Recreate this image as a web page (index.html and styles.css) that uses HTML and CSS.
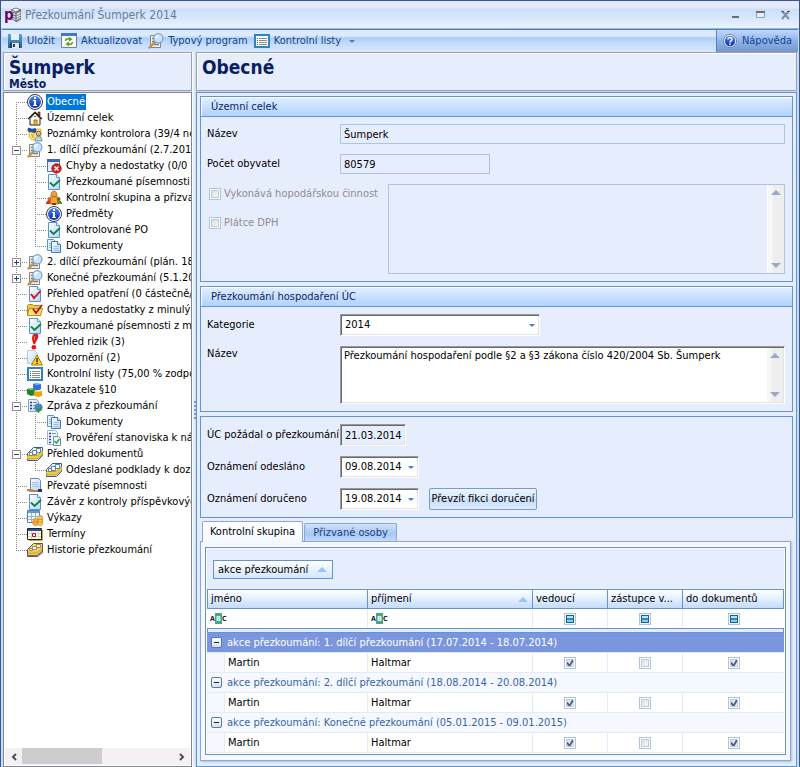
FILE: index.html
```html
<!DOCTYPE html>
<html lang="cs">
<head>
    <meta charset="UTF-8">
    <meta name="viewport" content="width=device-width, initial-scale=1.0">
    <title>Přezkoumání Šumperk 2014</title>
    <link rel="stylesheet" href="styles.css">
</head>
<body>
    <!-- icon set -->
    <svg class="defs" aria-hidden="true">
        <defs>
            <linearGradient id="g-blue" x1="0" y1="0" x2="0" y2="1">
                <stop offset="0" stop-color="#4f86ee"/><stop offset="1" stop-color="#0a2fb4"/>
            </linearGradient>
            <linearGradient id="g-page" x1="0" y1="0" x2="1" y2="1">
                <stop offset="0" stop-color="#fff"/><stop offset="1" stop-color="#b4d4f4"/>
            </linearGradient>
            <linearGradient id="g-save" x1="0" y1="0" x2="0" y2="1">
                <stop offset="0" stop-color="#5aa2d6"/><stop offset="1" stop-color="#2a6294"/>
            </linearGradient>
        </defs>
        <symbol id="i-info" viewBox="0 0 16 16">
            <circle cx="8" cy="8" r="7.5" fill="#fff" stroke="#30364c"/>
            <circle cx="8" cy="8" r="6" fill="url(#g-blue)"/>
            <path d="M7 3h2v2H7zM6 6h3v5h1v1H6v-1h1V7H6z" fill="#fff"/>
        </symbol>
        <symbol id="i-help" viewBox="0 0 16 16">
            <circle cx="8" cy="8" r="6.5" fill="#fff" stroke="#6f7fa8"/>
            <circle cx="8" cy="8" r="5.2" fill="url(#g-blue)"/>
            <path d="M6 6.6C6 4 10 4 10 6.4 10 7.8 8 7.8 8 9.4" fill="none" stroke="#fff" stroke-width="1.5"/>
            <path d="M7.2 10.4h1.6V12H7.2z" fill="#fff"/>
        </symbol>
        <symbol id="i-home" viewBox="0 0 16 16">
            <path d="M11 2h2v4h-2z" fill="#c23a2a" stroke="#222" stroke-width=".6"/>
            <path d="M3 8.5V15h10V8.5L8 3z" fill="#fffbe8" stroke="#222"/>
            <path d="M1.2 9 8 2.2 14.8 9" fill="none" stroke="#222" stroke-width="1.5"/>
            <path d="M7 10h3v5H7z" fill="#f2b632" stroke="#8a5a10" stroke-width=".8"/>
            <path d="M8 5.8 9.2 7H6.8z" fill="#222"/>
        </symbol>
        <symbol id="i-notes" viewBox="0 0 16 16">
            <path d="M2 3h12v11H5l-3-3z" fill="#fbe279" stroke="#c9a227" stroke-width=".7"/>
            <path d="M1 2c2-1 3 1 4.5 1C7 3 8 1 9 3s0 4-2 4C5 7 5 6 4 6 1 7 0 4 1 2z" fill="#1f4f9e"/>
            <circle cx="11.500" cy="7.500" r="2.300" fill="#e9b98a" stroke="#6b4b32" stroke-width=".8"/>
            <path d="M8 15c0-6 7-6 7 0z" fill="#b9d8f4" stroke="#4272a8" stroke-width=".7"/>
            <path d="M4 9h3M5 11h2" stroke="#d28e1a"/>
        </symbol>
        <symbol id="i-search" viewBox="0 0 16 16">
            <path d="M2.500 2.500h10v12h-10z" fill="#f4f1ec" stroke="#8c8378"/>
            <path d="M4 5.500h2M4 8.500h2M6 11.500h5" stroke="#7d7d7d" stroke-width="1.500"/>
            <path d="m6.500 9.500-5 5" stroke="#c48d48" stroke-width="2.400" stroke-linecap="round"/>
            <circle cx="10.300" cy="5.300" r="4.600" fill="#c9e3fa" stroke="#7ba3d0" stroke-width="1.300"/>
            <path d="M7.800 5.300c0-2 1.500-2.800 3-2.600" stroke="#fff" stroke-width="1.500" fill="none"/>
        </symbol>
        <symbol id="i-error" viewBox="0 0 16 16">
            <path d="M1.500 1.500h12v12h-12z" fill="#e6ebf5" stroke="#5f7396"/>
            <path d="M1 1h13v3H1z" fill="#3a66b4"/>
            <circle cx="10.500" cy="10.500" r="4.700" fill="#cf2320" stroke="#8d0f0c" stroke-width=".8"/>
            <path d="m8.500 8.500 4 4m0-4-4 4" stroke="#fff" stroke-width="1.300"/>
        </symbol>
        <symbol id="i-check" viewBox="0 0 16 16">
            <path d="M2.500.500h8l3 3v12h-11z" fill="url(#g-page)" stroke="#5a92cf"/>
            <path d="M10.500.500v3h3" fill="#fff" stroke="#5a92cf"/>
            <path d="m4 8.500 3.500 3.500L14 6" fill="none" stroke="#11803c" stroke-width="1.800"/>
        </symbol>
        <symbol id="i-check-red" viewBox="0 0 16 16">
            <path d="M2.500.500h8l3 3v12h-11z" fill="url(#g-page)" stroke="#5a92cf"/>
            <path d="M10.500.500v3h3" fill="#fff" stroke="#5a92cf"/>
            <path d="m4 8 3 4 6.500-7" fill="none" stroke="#c8151b" stroke-width="1.800"/>
        </symbol>
        <symbol id="i-group" viewBox="0 0 16 16">
            <circle cx="3.500" cy="9" r="2" fill="#d8652a"/>
            <circle cx="12.500" cy="9" r="2" fill="#8a5a1c"/>
            <path d="M0 14c0-5 6-5 6 0z" fill="#d3301f"/>
            <path d="M10 14c0-5 6-5 6 0z" fill="#5c8a2a"/>
            <path d="M5 7c-1-8 7-8 6 0z" fill="#e9a13b" stroke="#9a5a14" stroke-width=".7"/>
            <path d="M4 14c0-10 8-10 8 0z" fill="#f0a62c" stroke="#9a5a14" stroke-width=".7"/>
            <path d="M6 13h4v2H6z" fill="#7c3c12"/>
        </symbol>
        <symbol id="i-docs" viewBox="0 0 16 16">
            <path d="M1.500 1.500h6l2 2v9h-8z" fill="#e6f1fd" stroke="#5a92d4"/>
            <path d="M3 5.500h2M3 7.500h2M3 9.500h2" stroke="#86b1e4"/>
            <path d="M5.500 3.500h6l3 3v8h-9z" fill="url(#g-page)" stroke="#3f7bc4"/>
            <path d="M7.500 8.500h5M7.500 10.500h5M7.500 12.500h5" stroke="#9cc0ec"/>
            <path d="M11.500 3.500v3h3" fill="#fff" stroke="#3f7bc4"/>
        </symbol>
        <symbol id="i-folder-check" viewBox="0 0 16 16">
            <path d="M.500 13.500v-10l1-1h4l1 1h7v10z" fill="#f2c84c" stroke="#b98a14"/>
            <path d="M.500 13.500 2 6.500h13.500l-2 7z" fill="#fbe07a" stroke="#b98a14"/>
            <path d="m6 7 3 4 6-8" fill="none" stroke="#b0151b" stroke-width="1.800"/>
        </symbol>
        <symbol id="i-risk" viewBox="0 0 16 16">
            <path d="M7 0c4-1 5 1 4 4L8 10H6.500C5 7 4 2 7 0z" fill="#e3141b"/>
            <circle cx="6.800" cy="13.300" r="2.300" fill="#e3141b"/>
            <path d="M8 2c-1 1-.600 3-.500 4" stroke="#ff8d8a" fill="none"/>
        </symbol>
        <symbol id="i-warn" viewBox="0 0 16 16">
            <path d="M.500.500h7l3 3v10H.500z" fill="url(#g-page)" stroke="#b4c8e0"/>
            <path d="m10 5 5.500 10h-11z" fill="#ffd21e" stroke="#a87a08" stroke-linejoin="round"/>
            <path d="M9.400 8h1.300v4H9.400zM9.400 12.800h1.300V14H9.400z" fill="#222"/>
        </symbol>
        <symbol id="i-list" viewBox="0 0 16 16">
            <path d="M1 2h14v12H1z" fill="#fff" stroke="#2f83c4" stroke-width="2"/>
            <path d="M3 5.500h1M3 7.500h1M3 9.500h1M3 11.500h1" stroke="#1c66b0"/>
            <path d="M5 5.500h8M5 7.500h8M5 9.500h8M5 11.500h8" stroke="#8a8a8a"/>
        </symbol>
        <symbol id="i-cubes" viewBox="0 0 16 16">
            <path d="m9 1 5 1v5l-4 2-4-2V2z" fill="#2f6fe0"/>
            <path d="m6 2 4 1 4-1-5-1z" fill="#8ab4ff"/>
            <path d="m4 6 4 1v6l-4 1-4-2V7z" fill="#23802f"/>
            <path d="m0 7 4 1 4-1-4-1z" fill="#7ed07a"/>
            <path d="m11 8 4 1v5l-4 1-4-1V9z" fill="#e8a80c"/>
            <path d="m7 9 4 1 4-1-4-1z" fill="#ffe88a"/>
        </symbol>
        <symbol id="i-report" viewBox="0 0 16 16">
            <path d="M1.500 1.500h8l2 2v10h-10z" fill="url(#g-page)" stroke="#8fa2c8"/>
            <path d="M3 4.500h2M3 7.500h2M3 10.500h2" stroke="#1f3f9c" stroke-width="1.500"/>
            <path d="M6 4.500h4M6 7.500h3M6 10.500h2" stroke="#7389b8"/>
            <circle cx="11.500" cy="9.500" r="4" fill="#4a86c8"/>
            <path d="m8 9.500 3.500 6 4-7-4 2z" fill="#2c9a3c"/>
        </symbol>
        <symbol id="i-verify" viewBox="0 0 16 16">
            <path d="M1.500.500h8l2 2v12h-10z" fill="#f5f8fd" stroke="#a4b4d4"/>
            <path d="M3 3.500h2M3 6.500h2M3 9.500h2M3 12.500h2" stroke="#2c4a9c" stroke-width="1.500"/>
            <path d="M6 3.500h4" stroke="#8095b8"/>
            <path d="M7.500 6.500h5l2 2v7h-7z" fill="#eef6ee" stroke="#6c8fb4"/>
            <path d="m8.500 11 2 2 3-4" fill="none" stroke="#3ba24a" stroke-width="1.500"/>
        </symbol>
        <symbol id="i-binders" viewBox="0 0 16 16">
            <path d="M6.500 1.500h9v8l-5 5H.500v-7z" fill="#e8f0fa" stroke="#3c5a8c"/>
            <path d="M2.500 6.500h3v3h-3zM5.500 4.500h4v4h-4zM9.500 2.500h4v4h-4z" fill="#fff" stroke="#5c82b8"/>
            <path d="M0 9.500h10l6-5v3.500l-6 5H0z" fill="#f5cf2e" stroke="#94720a" stroke-width=".6"/>
        </symbol>
        <symbol id="i-hand" viewBox="0 0 16 16">
            <path d="M3.500.500h8l2 2v10h-10z" fill="url(#g-page)" stroke="#5b8ccb"/>
            <path d="M5 4.500h6M5 6.500h6M5 8.500h6" stroke="#9fc0e8"/>
            <path d="M0 11h4l3 1h5l2 2H4l-4-1z" fill="#b8804e"/>
            <path d="M11 11h4v3h-4z" fill="#243b66"/>
        </symbol>
        <symbol id="i-sheets" viewBox="0 0 16 16">
            <path d="M.500.500h12v12H.500z" fill="#fff" stroke="#4a86cc"/>
            <path d="M1 1h11v2H1z" fill="#5a9ae0"/>
            <path d="M1 6.500h11M1 9.500h11M4.500 3v9M8.500 3v9" stroke="#8fb6e4"/>
            <path d="M6 10c0-2 5-2 5 0v4c0 2-5 2-5 0z" fill="#f2b13a" stroke="#c9821a" stroke-width=".7"/>
            <path d="M11 7c0-2 4.500-2 4.500 0v7c0 2-4.500 2-4.500 0z" fill="#f8c75a" stroke="#c9821a" stroke-width=".7"/>
            <path d="M6 12h5M11 9.500h4.500M11 12h4.500" stroke="#c9821a" stroke-width=".7"/>
        </symbol>
        <symbol id="i-calendar" viewBox="0 0 16 16">
            <path d="M.500 2.500h14v11H.500z" fill="#fffef0" stroke="#222"/>
            <path d="M1 3h13v2H1z" fill="#2b4fa8"/>
            <path d="M1 7.500h13M1 10.500h13M4.500 5v8M8.500 5v8M11.500 5v8" stroke="#ddd8b0"/>
            <path d="M5.500 7.500h3v3h-3z" fill="#fff" stroke="#b01030"/>
            <path d="M2 14.500h13.500V4" fill="none" stroke="#d2a520"/>
        </symbol>
        <symbol id="i-history" viewBox="0 0 16 16">
            <path d="M6.500 1.500h9v9l-5 4H.500v-7z" fill="#f3d488" stroke="#6a5a34"/>
            <path d="M2.500 6.500h3v2h-3zM5.500 4.500h4v3h-4zM9.500 2.500h4v3h-4z" fill="#fffaf0" stroke="#a08a54"/>
            <path d="M1 9.500h9l5-4v3l-5 4H1z" fill="#efb42a"/>
            <path d="M1 13.500h9l5-4" fill="none" stroke="#4f6fa8"/>
        </symbol>
        <symbol id="i-save" viewBox="0 0 16 16">
            <path d="M1 1h13l1 1v13H1z" fill="url(#g-save)"/>
            <path d="M4 1h8v6H4z" fill="#e2f1fb"/>
            <path d="M3 10h10v5H3z" fill="#2b3a48"/>
            <path d="M5 10h7v5H5z" fill="#e5e8ea"/>
            <path d="M6 11h2v3H6z" fill="#2b3a48"/>
        </symbol>
        <symbol id="i-refresh" viewBox="0 0 16 16">
            <path d="M.500.500h15v14H.500z" fill="#fbf9f2" stroke="#6781b0"/>
            <path d="M0 0h16v3H0z" fill="#4475cf"/>
            <path d="M4.500 8c0-2 2-2.500 4-2" fill="none" stroke="#53a318" stroke-width="1.500"/>
            <path d="m8 3.800 3.500 2.500L8 8.500zM8 8.500 4.500 11 8 13.500z" fill="#53a318"/>
            <path d="M11.500 9c0 2-2 2.500-4 2" fill="none" stroke="#53a318" stroke-width="1.500"/>
        </symbol>
        <symbol id="i-app" viewBox="0 0 16 16">
            <path d="m6 3 5-2 5 2-5 2zM16 3v9l-5 3V5z" fill="#f4f4f4" stroke="#4c4c4c" stroke-width=".7"/>
            <path d="m7 5 4 1.500 5-2.500M7 7.500 11 9l5-2.500M7 10l4 1.500 5-2.500M7 12l4 2 5-3" fill="none" stroke="#5c5c5c" stroke-width=".9"/>
            <text x="-1" y="13" class="app-letter">p</text>
        </symbol>
        <symbol id="i-abc" viewBox="0 0 17 11">
            <path d="M5 0h7v11H5z" fill="#43a888"/>
            <text x="0" y="8" class="abc-letter">A</text>
            <text x="6" y="8" class="abc-letter light">B</text>
            <text x="12" y="8" class="abc-letter">C</text>
        </symbol>
    </svg>

    <div class="window">
        <header class="titlebar">
            <svg class="icon"><use href="#i-app"/></svg>
            <h1>Přezkoumání Šumperk 2014</h1>
            <div class="win-buttons">
                <button type="button" aria-label="Minimalizovat"><svg viewBox="0 0 12 12"><path d="M2 7h7v2H2z" fill="#6e6e70"/></svg></button>
                <button type="button" aria-label="Maximalizovat"><svg viewBox="0 0 12 12"><path d="M1.500 3.500h8v5h-8z" fill="#e8f0fc" stroke="#8ba0bd"/><path d="M1 2h9v2H1z" fill="#6e6e70"/></svg></button>
                <button type="button" aria-label="Zavřít"><svg viewBox="0 0 12 12"><path d="m2 2 7 8M9 2l-7 8" stroke="#7d8da6" stroke-width="2"/><path d="M1 2.500h3M7 2.500h3" stroke="#666"/></svg></button>
            </div>
        </header>

        <nav class="toolbar">
            <button type="button" class="tool"><svg class="icon"><use href="#i-save"/></svg>Uložit</button>
            <button type="button" class="tool"><svg class="icon"><use href="#i-refresh"/></svg>Aktualizovat</button>
            <button type="button" class="tool"><svg class="icon"><use href="#i-search"/></svg>Typový program</button>
            <button type="button" class="tool"><svg class="icon"><use href="#i-list"/></svg>Kontrolní listy<span class="caret"></span></button>
            <button type="button" class="tool help"><svg class="icon"><use href="#i-help"/></svg>Nápověda</button>
        </nav>

        <div class="columns">
            <aside class="side">
                <div class="heading">
                    <h2>Šumperk</h2>
                    <p>Město</p>
                </div>
                <div class="tree-box">
                    <ul class="tree">
                        <li><div class="node first"><span class="twig"></span><svg class="icon"><use href="#i-info"/></svg><a href="#" class="selected">Obecné</a></div></li>
                        <li><div class="node"><span class="twig"></span><svg class="icon"><use href="#i-home"/></svg><a href="#">Územní celek</a></div></li>
                        <li><div class="node"><span class="twig"></span><svg class="icon"><use href="#i-notes"/></svg><a href="#">Poznámky kontrolora (39/4 ne</a></div></li>
                        <li>
                            <div class="node"><span class="twig"><button type="button" class="expander open" aria-label="Sbalit"></button></span><svg class="icon"><use href="#i-search"/></svg><a href="#">1. dílčí přezkoumání (2.7.2014</a></div>
                            <ul>
                                <li><div class="node"><span class="twig"></span><svg class="icon"><use href="#i-error"/></svg><a href="#">Chyby a nedostatky (0/0</a></div></li>
                                <li><div class="node"><span class="twig"></span><svg class="icon"><use href="#i-check"/></svg><a href="#">Přezkoumané písemnosti (</a></div></li>
                                <li><div class="node"><span class="twig"></span><svg class="icon"><use href="#i-group"/></svg><a href="#">Kontrolní skupina a přizva</a></div></li>
                                <li><div class="node"><span class="twig"></span><svg class="icon"><use href="#i-info"/></svg><a href="#">Předměty</a></div></li>
                                <li><div class="node"><span class="twig"></span><svg class="icon"><use href="#i-check"/></svg><a href="#">Kontrolované PO</a></div></li>
                                <li><div class="node last"><span class="twig"></span><svg class="icon"><use href="#i-docs"/></svg><a href="#">Dokumenty</a></div></li>
                            </ul>
                        </li>
                        <li><div class="node"><span class="twig"><button type="button" class="expander" aria-label="Rozbalit"></button></span><svg class="icon"><use href="#i-search"/></svg><a href="#">2. dílčí přezkoumání (plán. 18.</a></div></li>
                        <li><div class="node"><span class="twig"><button type="button" class="expander" aria-label="Rozbalit"></button></span><svg class="icon"><use href="#i-search"/></svg><a href="#">Konečné přezkoumání (5.1.20</a></div></li>
                        <li><div class="node"><span class="twig"></span><svg class="icon"><use href="#i-check-red"/></svg><a href="#">Přehled opatření (0 částečně/</a></div></li>
                        <li><div class="node"><span class="twig"></span><svg class="icon"><use href="#i-folder-check"/></svg><a href="#">Chyby a nedostatky z minulýc</a></div></li>
                        <li><div class="node"><span class="twig"></span><svg class="icon"><use href="#i-check"/></svg><a href="#">Přezkoumané písemnosti z min</a></div></li>
                        <li><div class="node"><span class="twig"></span><svg class="icon"><use href="#i-risk"/></svg><a href="#">Přehled rizik (3)</a></div></li>
                        <li><div class="node"><span class="twig"></span><svg class="icon"><use href="#i-warn"/></svg><a href="#">Upozornění (2)</a></div></li>
                        <li><div class="node"><span class="twig"></span><svg class="icon"><use href="#i-list"/></svg><a href="#">Kontrolní listy (75,00 % zodpo</a></div></li>
                        <li><div class="node"><span class="twig"></span><svg class="icon"><use href="#i-cubes"/></svg><a href="#">Ukazatele §10</a></div></li>
                        <li>
                            <div class="node"><span class="twig"><button type="button" class="expander open" aria-label="Sbalit"></button></span><svg class="icon"><use href="#i-report"/></svg><a href="#">Zpráva z přezkoumání</a></div>
                            <ul>
                                <li><div class="node"><span class="twig"></span><svg class="icon"><use href="#i-docs"/></svg><a href="#">Dokumenty</a></div></li>
                                <li><div class="node last"><span class="twig"></span><svg class="icon"><use href="#i-verify"/></svg><a href="#">Prověření stanoviska k ná</a></div></li>
                            </ul>
                        </li>
                        <li>
                            <div class="node"><span class="twig"><button type="button" class="expander open" aria-label="Sbalit"></button></span><svg class="icon"><use href="#i-binders"/></svg><a href="#">Přehled dokumentů</a></div>
                            <ul>
                                <li><div class="node last"><span class="twig"></span><svg class="icon"><use href="#i-binders"/></svg><a href="#">Odeslané podklady k dozo</a></div></li>
                            </ul>
                        </li>
                        <li><div class="node"><span class="twig"></span><svg class="icon"><use href="#i-hand"/></svg><a href="#">Převzaté písemnosti</a></div></li>
                        <li><div class="node"><span class="twig"></span><svg class="icon"><use href="#i-check"/></svg><a href="#">Závěr z kontroly příspěvkovýc</a></div></li>
                        <li><div class="node"><span class="twig"></span><svg class="icon"><use href="#i-sheets"/></svg><a href="#">Výkazy</a></div></li>
                        <li><div class="node"><span class="twig"></span><svg class="icon"><use href="#i-calendar"/></svg><a href="#">Termíny</a></div></li>
                        <li><div class="node last"><span class="twig"></span><svg class="icon"><use href="#i-history"/></svg><a href="#">Historie přezkoumání</a></div></li>
                    </ul>
                    <div class="hscroll">
                        <button type="button" aria-label="Doleva"><svg viewBox="0 0 8 8"><path d="M6 1 3 4l3 3" fill="none" stroke="#505050" stroke-width="2"/></svg></button>
                        <div class="track"><div class="thumb"></div></div>
                        <button type="button" aria-label="Doprava"><svg viewBox="0 0 8 8"><path d="m2 1 3 3-3 3" fill="none" stroke="#505050" stroke-width="2"/></svg></button>
                    </div>
                </div>
            </aside>

            <div class="splitter"><span></span></div>

            <main class="main">
                <div class="heading">
                    <h2>Obecné</h2>
                </div>
                <div class="panel">
                    <section class="group">
                        <h3>Územní celek</h3>
                        <div class="fields loose">
                            <label for="nazev">Název</label>
                            <input class="flat" id="nazev" type="text" value="Šumperk" readonly>
                            <label for="obyvatel">Počet obyvatel</label>
                            <input class="flat short" id="obyvatel" type="text" value="80579" readonly>
                        </div>
                        <div class="activity">
                            <div class="checks">
                                <label><input type="checkbox" class="check" disabled>Vykonává hopodářskou činnost</label>
                                <label><input type="checkbox" class="check" disabled>Plátce DPH</label>
                            </div>
                            <div class="memo flat">
                                <textarea aria-label="Činnost" readonly></textarea>
                                <div class="vscroll"><i class="up"></i><i class="down"></i></div>
                            </div>
                        </div>
                    </section>

                    <section class="group">
                        <h3>Přezkoumání hospodaření ÚC</h3>
                        <div class="fields">
                            <label for="kategorie">Kategorie</label>
                            <select class="sunken drop" id="kategorie">
                                <option>2014</option>
                            </select>
                            <label class="top" for="popis">Název</label>
                            <div class="memo sunken">
                                <textarea id="popis">Přezkoumání hospodaření podle §2 a §3 zákona číslo 420/2004 Sb. Šumperk</textarea>
                                <div class="vscroll"><i class="up"></i><i class="down"></i></div>
                            </div>
                        </div>
                    </section>

                    <section class="group">
                        <div class="fields dates">
                            <label for="pozadal">ÚC požádal o přezkoumání</label>
                            <input class="sunken locked" id="pozadal" type="text" value="21.03.2014" readonly>
                            <label for="odeslano">Oznámení odesláno</label>
                            <div class="sunken date">
                                <input id="odeslano" type="text" value="09.08.2014">
                                <button type="button" aria-label="Vybrat datum"><span class="caret"></span></button>
                            </div>
                            <label for="doruceno">Oznámení doručeno</label>
                            <div class="row">
                                <div class="sunken date">
                                    <input id="doruceno" type="text" value="19.08.2014">
                                    <button type="button" aria-label="Vybrat datum"><span class="caret"></span></button>
                                </div>
                                <button type="button" class="push">Převzít fikci doručení</button>
                            </div>
                        </div>
                    </section>

                    <div class="tabs" role="tablist">
                        <button type="button" role="tab" class="tab active" aria-selected="true">Kontrolní skupina</button>
                        <button type="button" role="tab" class="tab" aria-selected="false">Přizvané osoby</button>
                    </div>
                    <div class="tab-page">
                        <div class="grid">
                            <div class="group-by">
                                <button type="button">akce přezkoumání<span class="sort"></span></button>
                            </div>
                            <table>
                                <colgroup>
                                    <col class="c-indent"><col class="c-name"><col><col class="c-flag"><col class="c-flag"><col class="c-docs">
                                </colgroup>
                                <thead>
                                    <tr>
                                        <th colspan="2">jméno</th>
                                        <th><div class="sorted">příjmení<span class="sort"></span></div></th>
                                        <th>vedoucí</th>
                                        <th>zástupce v...</th>
                                        <th>do dokumentů</th>
                                    </tr>
                                    <tr class="filter">
                                        <td colspan="2"><svg class="abc"><use href="#i-abc"/></svg></td>
                                        <td><svg class="abc"><use href="#i-abc"/></svg></td>
                                        <td class="mid"><input type="checkbox" class="check mixed" aria-label="Filtr vedoucí"></td>
                                        <td class="mid"><input type="checkbox" class="check mixed" aria-label="Filtr zástupce"></td>
                                        <td class="mid"><input type="checkbox" class="check mixed" aria-label="Filtr do dokumentů"></td>
                                    </tr>
                                    <tr class="divider"><td colspan="6"></td></tr>
                                </thead>
                                <tbody>
                                    <tr class="band current"><td colspan="6"><div><button type="button" class="fold" aria-label="Sbalit"></button>akce přezkoumání: 1. dílčí přezkoumání (17.07.2014 - 18.07.2014)</div></td></tr>
                                    <tr>
                                        <td class="indent"></td><td>Martin</td><td>Haltmar</td>
                                        <td class="mid"><input type="checkbox" class="check" aria-label="vedoucí" checked></td>
                                        <td class="mid"><input type="checkbox" class="check" aria-label="zástupce vedoucího"></td>
                                        <td class="mid"><input type="checkbox" class="check" aria-label="do dokumentů" checked></td>
                                    </tr>
                                    <tr class="band"><td colspan="6"><div><button type="button" class="fold" aria-label="Sbalit"></button>akce přezkoumání: 2. dílčí přezkoumání (18.08.2014 - 20.08.2014)</div></td></tr>
                                    <tr>
                                        <td class="indent"></td><td>Martin</td><td>Haltmar</td>
                                        <td class="mid"><input type="checkbox" class="check" aria-label="vedoucí" checked></td>
                                        <td class="mid"><input type="checkbox" class="check" aria-label="zástupce vedoucího"></td>
                                        <td class="mid"><input type="checkbox" class="check" aria-label="do dokumentů" checked></td>
                                    </tr>
                                    <tr class="band"><td colspan="6"><div><button type="button" class="fold" aria-label="Sbalit"></button>akce přezkoumání: Konečné přezkoumání (05.01.2015 - 09.01.2015)</div></td></tr>
                                    <tr>
                                        <td class="indent"></td><td>Martin</td><td>Haltmar</td>
                                        <td class="mid"><input type="checkbox" class="check" aria-label="vedoucí" checked></td>
                                        <td class="mid"><input type="checkbox" class="check" aria-label="zástupce vedoucího"></td>
                                        <td class="mid"><input type="checkbox" class="check" aria-label="do dokumentů" checked></td>
                                    </tr>
                                </tbody>
                            </table>
                        </div>
                    </div>
                </div>
            </main>
        </div>
    </div>
</body>
</html>
```
FILE: styles.css
```css
* {
    box-sizing: border-box;
}
body {
    margin: 0;
    font-family: "DejaVu Sans Condensed", "DejaVu Sans", sans-serif;
    font-size: 11px;
    line-height: 16px;
    color: #000;
}
h1, h2, h3, p, ul {
    margin: 0;
    padding: 0;
}
button, input, select, textarea {
    font: inherit;
    color: inherit;
    margin: 0;
    padding: 0;
    border: none;
    background: none;
    border-radius: 0;
    outline: none;
}
.defs {
    position: absolute;
    width: 0;
    height: 0;
}
.icon {
    width: 16px;
    height: 16px;
    flex: none;
}
.app-letter {
    font-size: 15px;
    font-weight: bold;
    fill: #6a0a5c;
}
.abc-letter {
    font-size: 7px;
    font-weight: bold;
    fill: #222;
}
.abc-letter.light {
    fill: #fff;
}
.caret {
    border: 3px solid transparent;
    border-top-color: #4c7db8;
    border-bottom: none;
}

/* Window frame */
.window {
    display: flex;
    flex-direction: column;
    min-height: 100vh;
    border: 1px solid #3b5888;
    border-bottom: none;
    background: #c4dbf9;
}
.titlebar {
    display: flex;
    align-items: center;
    gap: 4px;
    height: 28px;
    padding: 0 7px 0 4px;
    border-bottom: 1px solid #8fb8e6;
    background: linear-gradient(#e4e9fb 0 7px, #cbdff8 8px, #dbe9fd 70%, #eaf4ff);
}
.titlebar h1 {
    flex: 1;
    font-size: 12px;
    font-weight: normal;
    color: #6b7b93;
}
.win-buttons {
    display: flex;
    gap: 13px;
}
.win-buttons button, .win-buttons svg {
    display: block;
    width: 12px;
    height: 12px;
}

/* Toolbar */
.toolbar {
    display: flex;
    height: 23px;
    margin: 0 1px;
    padding-left: 3px;
    border-top: 1px solid #5680b8;
    background: linear-gradient(#dceafd 0 6px, #adcdf6 8px, #c3dbfa 60%, #d6e8fd);
}
.tool {
    display: flex;
    align-items: center;
    gap: 4px;
    padding: 0 4px 0 2px;
    color: #15428b;
}
.tool .caret {
    margin-left: 4px;
}
.help {
    margin-left: auto;
    padding: 0 6px 0 5px;
    border-left: 1px solid #5680b8;
    background: linear-gradient(#c0daff, #8db3ea 50%, #7796ca);
}

/* Columns */
.columns {
    display: flex;
    flex: 1;
    padding: 0 2px;
}
.side {
    display: flex;
    flex-direction: column;
    flex: none;
    width: 189px;
}
.main {
    display: flex;
    flex-direction: column;
    flex: 1;
    min-width: 0;
}
.heading {
    height: 39px;
    margin-bottom: 1px;
    padding: 4px 5px 0;
    overflow: hidden;
    border: 1px solid #a09fa3;
    box-shadow: inset 1px 1px #fff;
    background: #e6edfd;
    color: #0a1f62;
}
.heading h2 {
    font-size: 19px;
    line-height: 20px;
}
.heading p {
    font-size: 12px;
    line-height: 14px;
    font-weight: bold;
}
.splitter {
    display: flex;
    align-items: center;
    justify-content: flex-end;
    width: 4px;
    background: linear-gradient(90deg, #fff, #c4dbf9);
}
.splitter span {
    width: 2px;
    height: 18px;
    background: repeating-linear-gradient(#6f9ad3 0 2px, transparent 2px 4px);
}

/* Tree */
.tree-box {
    display: flex;
    flex-direction: column;
    justify-content: space-between;
    flex: 1;
    padding: 1px;
    overflow: hidden;
    border: 1px solid #828790;
    background: #fff;
}
.tree, .tree ul {
    list-style: none;
}
.node {
    display: flex;
    height: 16px;
    white-space: nowrap;
}
.node a {
    margin-left: 3px;
    padding: 0 1px;
    color: #000;
    text-decoration: none;
}
.node a.selected {
    background: #0078d7;
    color: #fff;
}
.twig {
    display: block;
    flex: none;
    width: 22px;
    height: 16px;
    padding: 4px 0 0 7px;
    background:
        repeating-linear-gradient(#8c8c8c 0 1px, transparent 1px 2px) 11px 0 / 1px 100% no-repeat,
        repeating-linear-gradient(90deg, #8c8c8c 0 1px, transparent 1px 2px) 11px 8px / 11px 1px no-repeat;
}
.first .twig {
    background-position: 11px 8px, 11px 8px;
}
.last .twig {
    background-size: 1px 8px, 11px 1px;
}
.tree ul {
    padding-left: 19px;
    background: repeating-linear-gradient(#8c8c8c 0 1px, transparent 1px 2px) 11px 0 / 1px 100% no-repeat;
}
.expander {
    display: block;
    width: 9px;
    height: 9px;
    border: 1px solid #919191;
    background:
        linear-gradient(#2b3f8c, #2b3f8c) 1px 3px / 5px 1px no-repeat,
        linear-gradient(#2b3f8c, #2b3f8c) 3px 1px / 1px 5px no-repeat,
        #fff;
}
.expander.open {
    background:
        linear-gradient(#2b3f8c, #2b3f8c) 1px 3px / 5px 1px no-repeat,
        #fff;
}
.hscroll {
    display: flex;
    height: 17px;
    background: #f4f0f4;
}
.hscroll button {
    display: flex;
    align-items: center;
    justify-content: center;
    width: 17px;
}
.hscroll svg {
    width: 8px;
    height: 8px;
}
.track {
    flex: 1;
}
.thumb {
    width: 53%;
    height: 16px;
    background: #cdcdcd;
}

/* Groups */
.panel {
    flex: 1;
    padding: 3px 3px 5px;
    border: 1px solid #6593cf;
    background: #e6edfd;
}
.group {
    margin-bottom: 4px;
    border: 1px solid #6593cf;
}
.group h3 {
    height: 20px;
    padding-left: 10px;
    border-bottom: 1px solid #6593cf;
    box-shadow: inset 1px 1px #fff;
    background: linear-gradient(#e3efff, #afd2ff);
    font-size: 11px;
    line-height: 20px;
    font-weight: normal;
    color: #0a246a;
}
.fields {
    display: grid;
    grid-template-columns: 133px 1fr;
    gap: 10px 0;
    align-items: center;
    padding: 7px 7px 7px 6px;
}
.fields.loose {
    padding-bottom: 10px;
}
.fields .top {
    align-self: start;
}
.flat {
    border: 1px solid #abc4e4;
    background: #e6edfd;
}
input.flat {
    width: 100%;
    height: 20px;
    padding-left: 3px;
}
input.short {
    width: 150px;
}
.sunken {
    border: 1px solid;
    border-color: #9a9a9a #fff #fff #9a9a9a;
    box-shadow: inset 1px 1px #696969, inset -1px -1px #e3e3e3;
    background: #fff;
}
.drop {
    width: 200px;
    height: 22px;
    padding-left: 4px;
    appearance: none;
    background: #fff url('data:image/svg+xml,<svg xmlns="http://www.w3.org/2000/svg" width="6" height="3"><path d="M0 0h6L3 3z" fill="%234c7db8"/></svg>') right 4px center no-repeat;
}
.memo {
    display: flex;
    height: 58px;
    padding: 1px;
}
.memo textarea {
    flex: 1;
    padding: 0 2px;
    resize: none;
    overflow: hidden;
}
.memo.flat {
    flex: 1;
    height: 90px;
    padding: 0;
}
.vscroll {
    display: flex;
    flex-direction: column;
    justify-content: space-between;
    align-items: center;
    width: 17px;
    padding: 5px 0;
    border-left: 1px solid #fff;
    background: linear-gradient(90deg, #f7f7f7 0 4px, #eee 5px);
}
.up {
    border: 5px solid transparent;
    border-bottom-color: #99a8cc;
    border-top: none;
}
.down {
    border: 5px solid transparent;
    border-top-color: #99a8cc;
    border-bottom: none;
}
.activity {
    display: flex;
    padding: 0 7px 7px 6px;
}
.checks {
    display: flex;
    flex-direction: column;
    gap: 13px;
    width: 181px;
    padding: 2px 0 0 2px;
    color: #8d8d8d;
}
.checks label {
    display: flex;
    align-items: center;
    gap: 3px;
    white-space: nowrap;
}
.check {
    display: block;
    flex: none;
    width: 12px;
    height: 12px;
    appearance: none;
    border: 1px solid #abc4e4;
    box-shadow: inset 0 0 0 1px #fff, inset 0 0 0 2px #c4c8d0;
    background: linear-gradient(135deg, #d4d6dc, #fff);
}
.check:checked {
    background:
        url('data:image/svg+xml,<svg xmlns="http://www.w3.org/2000/svg" width="10" height="10"><path d="M2 4.500 4.500 8 8 2" fill="none" stroke="%234a6193" stroke-width="2"/></svg>'),
        linear-gradient(135deg, #d4d6dc, #fff);
}
.check.mixed {
    box-shadow: inset 0 0 0 1px #fff, inset 0 0 0 2px #17618f;
    background: linear-gradient(#b8e4fa 0 4px, #2f8fc0 4px 6px, #7fd0f4 6px);
}
.dates .locked {
    width: 66px;
    background: #e6edfd;
}
.dates > .locked, .date {
    height: 22px;
}
.dates .locked, .date input {
    padding-left: 4px;
}
.date {
    display: flex;
    width: 79px;
}
.date input {
    flex: 1;
    min-width: 0;
}
.date button {
    display: flex;
    align-items: center;
    justify-content: center;
    width: 14px;
}
.row {
    display: flex;
    gap: 10px;
}
.push {
    width: 108px;
    height: 22px;
    border: 1px solid #7a9ac8;
    border-radius: 2px;
    background: linear-gradient(#eaf3ff, #d9e8fc 50%, #c6dcf9 51%, #ddebfd);
    white-space: nowrap;
}

/* Tabs */
.tabs {
    display: flex;
    align-items: flex-end;
    gap: 1px;
    height: 19px;
    padding-left: 2px;
}
.tab {
    width: 93px;
    height: 18px;
    border: 1px solid #8ba8d4;
    border-bottom: none;
    border-radius: 2px 2px 0 0;
    background: linear-gradient(#cfe1fa, #a9c7f0 60%, #c4dbf9);
    color: #15428b;
    white-space: nowrap;
}
.tab.active {
    position: relative;
    width: 101px;
    height: 21px;
    margin-bottom: -1px;
    background: linear-gradient(#fff, #f5f9ff);
    color: #000;
}
.tab-page {
    margin-right: 2px;
    padding: 5px 4px;
    border: 1px solid #8ba8d4;
    box-shadow: 1px 1px 2px #a9bfe0;
    background: #f5f9ff;
}
.grid {
    padding: 1px;
    border: 1px solid #6593cf;
    background: #fff;
}
.group-by {
    padding: 11px 6px 10px;
    background: #e6edfd;
}
.group-by button {
    display: flex;
    align-items: center;
    justify-content: space-between;
    width: 120px;
    height: 19px;
    padding: 0 5px 0 4px;
    border: 1px solid #6593cf;
    background: linear-gradient(#fff, #d3e6ff);
}
.sort {
    border: 5px solid transparent;
    border-bottom-color: #99c4f8;
    border-top: none;
}

/* Grid table */
table {
    width: 100%;
    table-layout: fixed;
    border-spacing: 0;
}
.c-indent {
    width: 18px;
}
.c-name {
    width: 143px;
}
.c-flag {
    width: 75px;
}
.c-docs {
    width: 101px;
}
th {
    height: 20px;
    padding: 0 4px 0 3px;
    overflow: hidden;
    border: 1px solid #6593cf;
    border-left: none;
    background: linear-gradient(#fff, #e3efff 50%, #c3dbfa);
    font-weight: normal;
    text-align: left;
    white-space: nowrap;
}
th:first-child {
    border-left: 1px solid #6593cf;
}
.sorted {
    display: flex;
    align-items: center;
    justify-content: space-between;
}
td {
    height: 20px;
    padding: 0 3px;
    border-right: 1px solid #e3ebfb;
    border-bottom: 1px solid #e3ebfb;
}
td:last-child {
    border-right: none;
}
td.indent {
    background: #f5f9ff;
}
.filter td {
    height: 19px;
    border-bottom: none;
}
.abc {
    display: block;
    width: 17px;
    height: 11px;
}
.mid .check {
    margin: 0 auto;
}
.divider td {
    height: 5px;
    padding: 0;
    border: 1px solid #6593cf;
    background: #e6edfd;
}
.band td {
    padding: 0 4px;
    background: #f5f9ff;
    color: #3764a8;
}
.band div {
    display: flex;
    align-items: center;
    gap: 5px;
}
.band.current td {
    background: #7b96df;
    color: #fff;
}
.fold {
    width: 11px;
    height: 11px;
    border: 1px solid #5b78b0;
    border-radius: 2px;
    background:
        linear-gradient(#222, #222) 2px 4px / 5px 1px no-repeat,
        linear-gradient(#fff, #d3def0);
}
```
